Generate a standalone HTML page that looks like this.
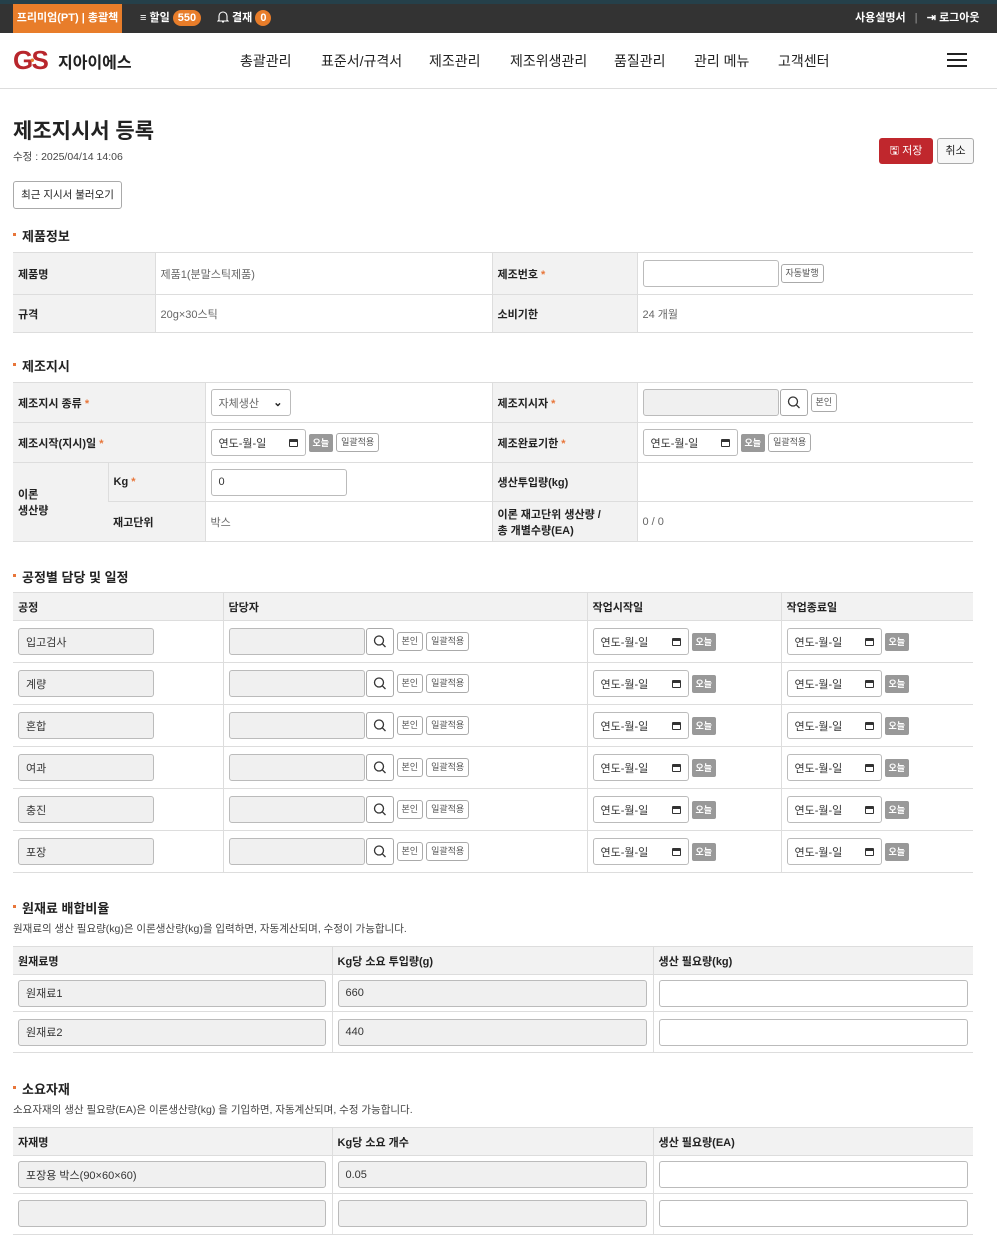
<!DOCTYPE html>
<html><head><meta charset="utf-8"><style>
*{box-sizing:border-box;margin:0;padding:0}
body{width:997px;height:1208px;overflow:hidden;background:#fff;font-family:"Liberation Sans","Noto Sans CJK KR",sans-serif;color:#222;position:relative;font-size:11px}
.a{position:absolute}
.top{left:0;top:0;width:997px;height:33px;background:#333;border-top:4px solid #25404a;color:#fff;font-weight:bold;font-size:11px}
.badge{display:inline-block;background:#e87d2a;color:#fff;border-radius:9px;padding:0 5px;line-height:16px;font-size:11px}
.hdr{left:0;top:33px;width:997px;height:56px;border-bottom:1px solid #ddd}
.nav{font-size:14px;color:#222;top:51px}
table{position:absolute;left:13px;width:960px;border-collapse:collapse;table-layout:fixed;border-top:1px solid #ddd;border-bottom:1px solid #999}
td,th{border-bottom:1px solid #ddd;padding:0 5px;font-size:11px;text-align:left;vertical-align:middle}
td.l,th{background:#f2f2f2;font-weight:bold;color:#222}
td.v{color:#666}
td+td,th+th{border-left:1px solid #ddd}
.req{color:#e8763a}
.in{display:inline-flex;align-items:center;vertical-align:middle;border:1px solid #bbb;border-radius:3px;height:27px;background:#fff;font-size:11px;padding:0 7px;color:#333}
.g{background:#f0f0f0}
.sb{display:inline-block;vertical-align:middle;border:1px solid #aaa;border-radius:3px;height:19px;line-height:17px;font-size:9px;padding:0 4px;color:#555;background:#fff;margin-left:3px}
.tb{display:inline-block;vertical-align:middle;background:#999;color:#fff;border-radius:2px;height:18px;line-height:18px;font-size:9px;padding:0 4px;margin-left:3px;font-weight:bold}
.srch{display:inline-block;vertical-align:middle;width:28px;height:27px;border:1px solid #aaa;border-radius:3px;background:#fff;margin-left:1px;position:relative}
.cal{margin-left:auto;width:9px;height:8px;border:1.5px solid #333;border-top-width:3px;border-radius:1px}
.sec{font-size:13px;font-weight:bold;left:13px}
.sec:before{content:"";display:inline-block;width:3px;height:3px;background:#e8763a;margin-right:6px;vertical-align:middle;position:relative;top:-3px}
.desc{left:13px;font-size:10.5px;color:#444}
</style></head><body>
<div class="a top">
 <div class="a" style="left:13px;top:0;width:109px;height:29px;background:#e87d2a;text-align:center;line-height:28px">프리미엄(PT) | 총괄책</div>
 <div class="a" style="left:140px;top:6px;line-height:16px">≡ 할일 <span class="badge">550</span></div>
 <div class="a" style="left:217px;top:6px;line-height:16px"><svg width="12" height="13" viewBox="0 0 12 13" style="vertical-align:-2px"><path d="M2 10V6a4 4 0 0 1 8 0v4l1 1H1z M5 12h2" fill="none" stroke="#fff" stroke-width="1.1"/></svg> 결재 <span class="badge">0</span></div>
 <div class="a" style="left:855px;top:6px;line-height:16px">사용설명서 <span style="color:#777;margin:0 6px">|</span> ⇥ 로그아웃</div>
</div>
<div class="a hdr">
 <div class="a" style="left:13px;top:12px;font-size:26px;font-weight:900;color:#b8262c;letter-spacing:-1px;font-family:'Liberation Sans',sans-serif;line-height:30px">G<span style="font-size:12px;color:#e87d2a;vertical-align:top;margin:0 -2px">•</span>S</div>
 <div class="a" style="left:58px;top:16px;font-size:16px;font-weight:bold">지아이에스</div>
 <div class="a" style="left:947px;top:20px;width:20px;height:14px;border-top:2px solid #222;border-bottom:2px solid #222"><div style="margin-top:4px;border-top:2px solid #222"></div></div>
</div>
<div class="a nav" style="left:240px">총괄관리</div>
<div class="a nav" style="left:321px">표준서/규격서</div>
<div class="a nav" style="left:429px">제조관리</div>
<div class="a nav" style="left:510px">제조위생관리</div>
<div class="a nav" style="left:614px">품질관리</div>
<div class="a nav" style="left:694px">관리 메뉴</div>
<div class="a nav" style="left:778px">고객센터</div>

<div class="a" style="left:13px;top:115px;font-size:21px;font-weight:bold">제조지시서 등록</div>
<div class="a" style="left:13px;top:149px;font-size:10.5px;color:#444">수정 : 2025/04/14 14:06</div>
<div class="a" style="left:879px;top:138px;width:54px;height:26px;background:#c0272d;color:#fff;border-radius:3px;text-align:center;line-height:26px;font-size:11px">🖫 저장</div>
<div class="a" style="left:937px;top:138px;width:37px;height:26px;border:1px solid #aaa;background:#f7f7f7;border-radius:3px;text-align:center;line-height:24px;font-size:11px">취소</div>
<div class="a" style="left:13px;top:181px;width:109px;height:28px;border:1px solid #aaa;border-radius:3px;text-align:center;line-height:26px;font-size:10.5px">최근 지시서 불러오기</div>

<div class="a sec" style="top:226px">제품정보</div>
<table style="top:252px"><colgroup><col style="width:142px"><col style="width:337px"><col style="width:145px"><col></colgroup>
<tr style="height:42px"><td class="l">제품명</td><td class="v">제품1(분말스틱제품)</td><td class="l">제조번호 <span class="req">*</span></td><td><span class="in" style="width:136px"></span><span class="sb" style="margin-left:2px">자동발행</span></td></tr>
<tr style="height:38px"><td class="l">규격</td><td class="v">20g×30스틱</td><td class="l">소비기한</td><td class="v">24 개월</td></tr>
</table>

<div class="a sec" style="top:356px">제조지시</div>
<table style="top:382px"><colgroup><col style="width:95px"><col style="width:97px"><col style="width:287px"><col style="width:145px"><col></colgroup>
<tr style="height:40px"><td class="l" colspan="2">제조지시 종류 <span class="req">*</span></td><td><span class="in" style="width:80px;color:#666">자체생산 <span style="margin-left:auto;color:#222;font-weight:bold">⌄</span></span></td><td class="l">제조지시자 <span class="req">*</span></td><td><span class="in g" style="width:136px"></span><span class="srch"><svg width="26" height="25" viewBox="0 0 26 25"><circle cx="12" cy="11.5" r="4.5" fill="none" stroke="#333" stroke-width="1.3"/><path d="M15.3 14.8L18.5 18" stroke="#333" stroke-width="1.3"/></svg></span><span class="sb">본인</span></td></tr>
<tr style="height:40px"><td class="l" colspan="2">제조시작(지시)일 <span class="req">*</span></td><td><span class="in" style="width:95px">연도-월-일<i class="cal"></i></span><span class="tb">오늘</span><span class="sb">일괄적용</span></td><td class="l">제조완료기한 <span class="req">*</span></td><td><span class="in" style="width:95px">연도-월-일<i class="cal"></i></span><span class="tb">오늘</span><span class="sb">일괄적용</span></td></tr>
<tr style="height:39px"><td class="l" rowspan="2">이론<br>생산량</td><td class="l">Kg <span class="req">*</span></td><td><span class="in" style="width:136px">0</span></td><td class="l">생산투입량(kg)</td><td></td></tr>
<tr style="height:40px"><td class="l">재고단위</td><td class="v">박스</td><td class="l">이론 재고단위 생산량 /<br>총 개별수량(EA)</td><td class="v">0 / 0</td></tr>
</table>

<div class="a sec" style="top:567px">공정별 담당 및 일정</div>
<table style="top:592px"><colgroup><col style="width:210px"><col style="width:364px"><col style="width:194px"><col></colgroup>
<tr style="height:28px"><th>공정</th><th>담당자</th><th>작업시작일</th><th>작업종료일</th></tr>
<tr style="height:42px"><td><span class="in g" style="width:136px">입고검사</span></td><td><span class="in g" style="width:136px"></span><span class="srch"><svg width="26" height="25" viewBox="0 0 26 25"><circle cx="12" cy="11.5" r="4.5" fill="none" stroke="#333" stroke-width="1.3"/><path d="M15.3 14.8L18.5 18" stroke="#333" stroke-width="1.3"/></svg></span><span class="sb">본인</span><span class="sb">일괄적용</span></td><td><span class="in" style="width:96px">연도-월-일<i class="cal"></i></span><span class="tb">오늘</span></td><td><span class="in" style="width:95px">연도-월-일<i class="cal"></i></span><span class="tb">오늘</span></td></tr>
<tr style="height:42px"><td><span class="in g" style="width:136px">계량</span></td><td><span class="in g" style="width:136px"></span><span class="srch"><svg width="26" height="25" viewBox="0 0 26 25"><circle cx="12" cy="11.5" r="4.5" fill="none" stroke="#333" stroke-width="1.3"/><path d="M15.3 14.8L18.5 18" stroke="#333" stroke-width="1.3"/></svg></span><span class="sb">본인</span><span class="sb">일괄적용</span></td><td><span class="in" style="width:96px">연도-월-일<i class="cal"></i></span><span class="tb">오늘</span></td><td><span class="in" style="width:95px">연도-월-일<i class="cal"></i></span><span class="tb">오늘</span></td></tr>
<tr style="height:42px"><td><span class="in g" style="width:136px">혼합</span></td><td><span class="in g" style="width:136px"></span><span class="srch"><svg width="26" height="25" viewBox="0 0 26 25"><circle cx="12" cy="11.5" r="4.5" fill="none" stroke="#333" stroke-width="1.3"/><path d="M15.3 14.8L18.5 18" stroke="#333" stroke-width="1.3"/></svg></span><span class="sb">본인</span><span class="sb">일괄적용</span></td><td><span class="in" style="width:96px">연도-월-일<i class="cal"></i></span><span class="tb">오늘</span></td><td><span class="in" style="width:95px">연도-월-일<i class="cal"></i></span><span class="tb">오늘</span></td></tr>
<tr style="height:42px"><td><span class="in g" style="width:136px">여과</span></td><td><span class="in g" style="width:136px"></span><span class="srch"><svg width="26" height="25" viewBox="0 0 26 25"><circle cx="12" cy="11.5" r="4.5" fill="none" stroke="#333" stroke-width="1.3"/><path d="M15.3 14.8L18.5 18" stroke="#333" stroke-width="1.3"/></svg></span><span class="sb">본인</span><span class="sb">일괄적용</span></td><td><span class="in" style="width:96px">연도-월-일<i class="cal"></i></span><span class="tb">오늘</span></td><td><span class="in" style="width:95px">연도-월-일<i class="cal"></i></span><span class="tb">오늘</span></td></tr>
<tr style="height:42px"><td><span class="in g" style="width:136px">충진</span></td><td><span class="in g" style="width:136px"></span><span class="srch"><svg width="26" height="25" viewBox="0 0 26 25"><circle cx="12" cy="11.5" r="4.5" fill="none" stroke="#333" stroke-width="1.3"/><path d="M15.3 14.8L18.5 18" stroke="#333" stroke-width="1.3"/></svg></span><span class="sb">본인</span><span class="sb">일괄적용</span></td><td><span class="in" style="width:96px">연도-월-일<i class="cal"></i></span><span class="tb">오늘</span></td><td><span class="in" style="width:95px">연도-월-일<i class="cal"></i></span><span class="tb">오늘</span></td></tr>
<tr style="height:42px"><td><span class="in g" style="width:136px">포장</span></td><td><span class="in g" style="width:136px"></span><span class="srch"><svg width="26" height="25" viewBox="0 0 26 25"><circle cx="12" cy="11.5" r="4.5" fill="none" stroke="#333" stroke-width="1.3"/><path d="M15.3 14.8L18.5 18" stroke="#333" stroke-width="1.3"/></svg></span><span class="sb">본인</span><span class="sb">일괄적용</span></td><td><span class="in" style="width:96px">연도-월-일<i class="cal"></i></span><span class="tb">오늘</span></td><td><span class="in" style="width:95px">연도-월-일<i class="cal"></i></span><span class="tb">오늘</span></td></tr>
</table>

<div class="a sec" style="top:898px">원재료 배합비율</div>
<div class="a desc" style="top:921px">원재료의 생산 필요량(kg)은 이론생산량(kg)을 입력하면, 자동계산되며, 수정이 가능합니다.</div>
<table style="top:946px"><colgroup><col style="width:319px"><col style="width:321px"><col></colgroup>
<tr style="height:28px"><th>원재료명</th><th>Kg당 소요 투입량(g)</th><th>생산 필요량(kg)</th></tr>
<tr style="height:37px"><td><span class="in g" style="width:308px">원재료1</span></td><td><span class="in g" style="width:309px">660</span></td><td><span class="in" style="width:309px"></span></td></tr>
<tr style="height:41px"><td><span class="in g" style="width:308px">원재료2</span></td><td><span class="in g" style="width:309px">440</span></td><td><span class="in" style="width:309px"></span></td></tr>
</table>

<div class="a sec" style="top:1079px">소요자재</div>
<div class="a desc" style="top:1102px">소요자재의 생산 필요량(EA)은 이론생산량(kg) 을 기입하면, 자동계산되며, 수정 가능합니다.</div>
<table style="top:1127px;border-bottom:none"><colgroup><col style="width:319px"><col style="width:321px"><col></colgroup>
<tr style="height:28px"><th>자재명</th><th>Kg당 소요 개수</th><th>생산 필요량(EA)</th></tr>
<tr style="height:38px"><td><span class="in g" style="width:308px">포장용 박스(90×60×60)</span></td><td><span class="in g" style="width:309px">0.05</span></td><td><span class="in" style="width:309px"></span></td></tr>
<tr style="height:41px"><td style="vertical-align:top;padding-top:6px"><span class="in g" style="width:308px"></span></td><td style="vertical-align:top;padding-top:6px"><span class="in g" style="width:309px"></span></td><td style="vertical-align:top;padding-top:6px"><span class="in" style="width:309px"></span></td></tr>
</table>
</body></html>
